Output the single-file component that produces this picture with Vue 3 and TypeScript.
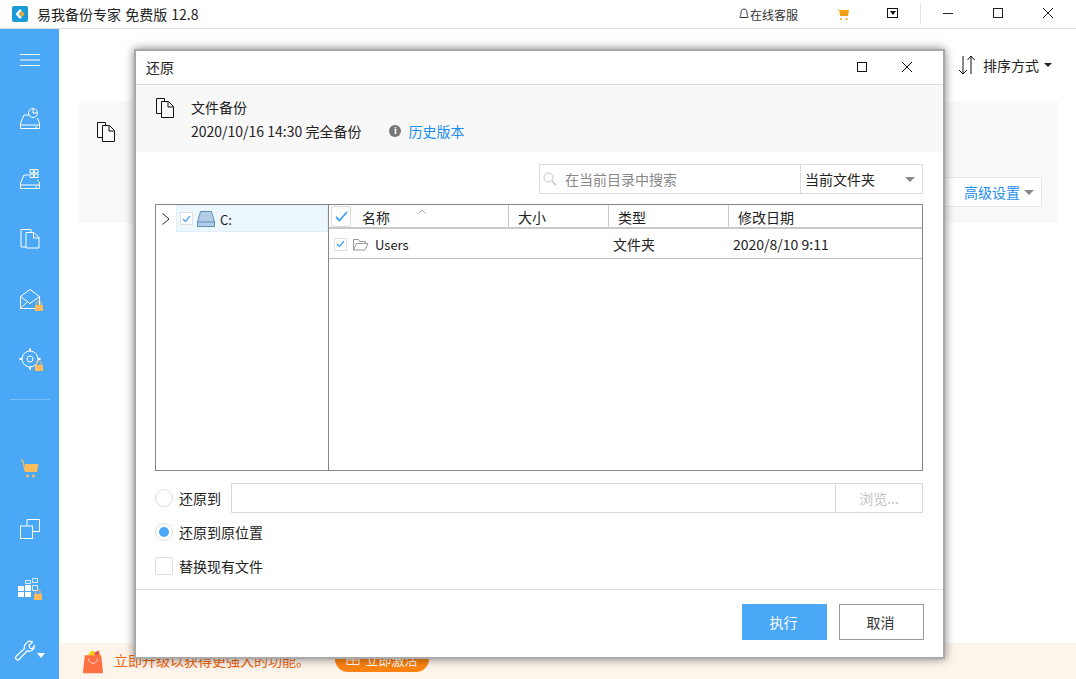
<script setup lang="ts">
interface NavItem { id: string; lock?: boolean }
const topNav: NavItem[] = [{ id: 'disk' }, { id: 'sys' }, { id: 'file' }, { id: 'mail', lock: true }, { id: 'target', lock: true }]
const cols = [
  { label: '大小', w: 100 },
  { label: '类型', w: 120 },
  { label: '修改日期', w: 193 },
]
</script>

<template>
  <div class="app">
    <header class="titlebar">
      <svg class="logo" width="16" height="16" viewBox="0 0 16 16"><rect width="16" height="16" rx="2" fill="#1a9bd7"/><path d="M8 3 3.500 8 8 13l1.800-1.800L6.800 8l3-3.200z" fill="#fff"/><path d="M9.500 4.800 12.700 8 9.500 11.200 8 8z" fill="#f6a821"/></svg>
      <span class="app-title">易我备份专家 免费版 12.8</span>
      <span class="service">
        <svg width="10" height="12" viewBox="0 0 10 12"><path d="M5 1C3 1 2 2.600 2 5c0 2-1 3-1 4.500h8C9 8 8 7 8 5c0-2.400-1-4-3-4z" fill="none" stroke="#333"/></svg>在线客服
      </span>
      <svg class="bar-cart" width="14" height="14" viewBox="0 0 14 14"><path d="M1 2h2l1 7h8l1-6H3.500z" fill="#f0a010"/><circle cx="5" cy="12" r="1" fill="#f0a010"/><circle cx="10.500" cy="12" r="1" fill="#f0a010"/></svg>
      <span class="menu-btn"><i></i></span>
      <span class="bar-sep"></span>
      <div class="win-btns">
        <svg width="12" height="12" viewBox="0 0 12 12"><path d="M1 6.500h10" stroke="#222"/></svg>
        <svg width="12" height="12" viewBox="0 0 12 12"><rect x="1.500" y="1.500" width="9" height="9" fill="none" stroke="#222"/></svg>
        <svg width="12" height="12" viewBox="0 0 12 12"><path d="M1 1l10 10M11 1 1 11" stroke="#222"/></svg>
      </div>
    </header>

    <div class="body">
      <aside class="sidebar">
        <svg class="burger" width="20" height="12" viewBox="0 0 20 12"><path d="M0 .5h20M0 6h20M0 11.500h20" stroke="#fff"/></svg>

        <div class="nav-top">
          <div v-for="n in topNav" :key="n.id" class="nav-item">
            <svg width="24" height="24" viewBox="0 0 24 24" fill="none" stroke="#fff">
              <template v-if="n.id === 'disk'">
                <path d="M2.500 16 6 8h5M2.500 16v5.500h19V16l-2-5M2.500 18h19M17 20h2"/>
                <circle cx="15" cy="6" r="4.500"/><path d="M15 1.500V6h4.500"/>
              </template>
              <template v-else-if="n.id === 'sys'">
                <path d="M2.500 16 6 8h5M2.500 16v5.500h19V16l-2-3M2.500 18h19M17 20h2"/>
                <path d="M12 2.500h3.500V6H12zM16.500 2.500H20V6h-3.500zM12 7h3.500v3.500H12zM16.500 7H20v3.500h-3.500z"/>
              </template>
              <template v-else-if="n.id === 'file'">
                <path d="M8 20H3V2.500h10V5"/><path d="M8 5.500h8l5 5v10.500H8z"/><path d="M15.500 5.500v5.500H21"/>
              </template>
              <template v-else-if="n.id === 'mail'">
                <path d="M2.500 9.500 12 2.500l9.500 7V21.500H2.500zM2.500 9.500l9.500 7 9.500-7M2.500 21.500l7-7"/>
              </template>
              <template v-else>
                <circle cx="12" cy="12" r="8"/><circle cx="12" cy="12" r="3"/>
                <path d="M12 1.500V4M12 20v2.500M1.500 12H4M20 12h2.500" stroke-width="2"/>
              </template>
            </svg>
            <svg v-if="n.lock" class="lock" width="8" height="11" viewBox="0 0 8 11"><path d="M1.800 5.500V3a2.200 2.200 0 0 1 4.400 0v2.500" fill="none" stroke="#fdbb5c"/><rect y="5" width="8" height="6" fill="#fdbb5c"/></svg>
          </div>
        </div>

        <div class="side-sep"></div>

        <div class="nav-bottom">
          <div class="nav-item">
            <svg width="20" height="20" viewBox="0 0 20 20"><path d="M1 1h1.500l2 4L5 13h12l1.500-8H4.500" fill="#fdbb5c"/><path d="M1 .8 2.500 1l2.500 11" stroke="#fdbb5c" fill="none"/><circle cx="7.500" cy="17" r="1.500" fill="#fdbb5c"/><circle cx="13.500" cy="17" r="1.500" fill="#fdbb5c"/></svg>
          </div>
          <div class="nav-item">
            <svg width="20" height="20" viewBox="0 0 20 20" fill="none" stroke="#fff"><path d="M7 6.500V.5h12.500v12H13"/><rect x=".5" y="7" width="12" height="12.500"/></svg>
          </div>
          <div class="nav-item">
            <svg class="grid-icon" width="22" height="22" viewBox="0 0 22 22"><path d="M1 8h6v5H1zM8 7h6v6H8zM1 14h6v5H1zM8 14h6v5H8z" fill="#fff"/><path d="M8.500 2.500h5v3h-5zM15.500.5h5v4h-5zM15.500 7.500h5v5h-5z" fill="none" stroke="#dbeeff"/></svg>
            <svg class="lock lock-grid" width="8" height="11" viewBox="0 0 8 11"><path d="M1.800 5.500V3a2.200 2.200 0 0 1 4.400 0v2.500" fill="none" stroke="#fdbb5c"/><rect y="5" width="8" height="6" fill="#fdbb5c"/></svg>
          </div>
          <div class="nav-item tool">
            <svg width="22" height="22" viewBox="0 0 22 22" fill="none" stroke="#fff" stroke-width="1.200"><path d="M13 3.500a5 5 0 0 1 6.500-1.500L16 5.500l.8 2.500 2.500.8 2-3a5 5 0 0 1-7 5L6 19.500c-1.500 1.500-4.500-1-3-3l8.500-8a5 5 0 0 1 1.500-5z"/></svg>
            <i class="tool-caret"></i>
          </div>
        </div>
      </aside>

      <main class="main">
        <div class="sort">
          <svg class="sort-icon" width="18" height="20" viewBox="0 0 18 20" fill="none" stroke="#111"><path d="M5 1v18M1 15l4 4 4-4" /><path d="M13 19V1M9.500 5 13 1l3.500 4"/></svg>
          <span>排序方式</span><i class="caret dark"></i>
        </div>
        <section class="card">
          <svg class="card-icon" width="18" height="20" viewBox="0 0 18 20" fill="none" stroke="#111"><path d="M5 15.500H.5V.5h8V3"/><path d="M5.500 3.500h7l5 5v11h-12z"/><path d="M12 3.500V9h5.500"/></svg>
          <div class="adv">高级设置<i class="caret gray"></i></div>
        </section>
        <footer class="promo">
          <svg class="bag" width="20" height="25" viewBox="0 0 22 26"><path d="M5 6l5-5 4 2 4-2 1 6z" fill="#f5d400"/><path d="M13 3l4-2 1 5h-5z" fill="#ec407a"/><path d="M2 6h18l2 19a1 1 0 0 1-1 1H1a1 1 0 0 1-1-1z" fill="#ff7043"/><path d="M6 10a5 5 0 0 0 10 0" fill="none" stroke="#ffe0d0"/></svg>
          <span class="promo-text">立即升级以获得更强大的功能。</span>
          <span class="activate">
            <svg width="14" height="12" viewBox="0 0 14 12" fill="none" stroke="#fff"><path d="M1 3.500h12v8H1zM7 3.500v8M1 7h12M3 .5h8"/></svg>
            立即激活
          </span>
        </footer>
      </main>
    </div>

    <div class="dialog">
      <div class="dlg-title">
        <span>还原</span>
        <div class="dlg-btns">
          <svg width="12" height="12" viewBox="0 0 12 12"><rect x="1.500" y="1.500" width="9" height="9" fill="none" stroke="#111"/></svg>
          <svg width="12" height="12" viewBox="0 0 12 12"><path d="M1 1l10 10M11 1 1 11" stroke="#111"/></svg>
        </div>
      </div>

      <div class="dlg-head">
        <svg class="head-icon" width="18" height="20" viewBox="0 0 18 20" fill="none" stroke="#111"><path d="M5 15.500H.5V.5h8V3"/><path d="M5.500 3.500h7l5 5v11h-12z"/><path d="M12 3.500V9h5.500"/></svg>
        <div class="head-text">
          <div>文件备份</div>
          <div class="head-sub">
            <span>2020/10/16 14:30 完全备份</span>
            <span class="info">i</span>
            <a class="link">历史版本</a>
          </div>
        </div>
      </div>

      <div class="search-row">
        <div class="search">
          <div class="search-input">
            <svg width="14" height="14" viewBox="0 0 14 14" fill="none" stroke="#c4c4c4"><circle cx="5.500" cy="5.500" r="4.500"/><path d="M9 9l4 4" stroke-width="1.500"/></svg>
            <span>在当前目录中搜索</span>
          </div>
          <div class="scope"><span>当前文件夹</span><i class="caret gray"></i></div>
        </div>
      </div>

      <div class="browser">
        <div class="tree">
          <svg class="chev" width="10" height="14" viewBox="0 0 10 14"><path d="M1.500 1.500 8 7l-6.500 5.500" fill="none" stroke="#222"/></svg>
          <div class="tree-node">
            <span class="check small">
              <svg width="9" height="8" viewBox="0 0 9 8"><path d="M1 4l2.500 2.500L8 1" fill="none" stroke="#4aa8f7" stroke-width="1.300"/></svg>
            </span>
            <svg width="18" height="16" viewBox="0 0 18 16"><path d="M3.500.5h11L17.500 11v4.500H.5V11z" fill="#b4cde6" stroke="#5f8fb8"/><path d="M.5 11h17" stroke="#5f8fb8"/></svg>
            <span class="drive-label">C:</span>
          </div>
        </div>
        <div class="list">
          <div class="list-head">
            <div class="col-name">
              <span class="check big">
                <svg width="13" height="11" viewBox="0 0 13 11"><path d="M1 6l3.500 3.500L12 1" fill="none" stroke="#3d9ef5" stroke-width="1.800"/></svg>
              </span>
              <span class="name-label">名称</span>
              <svg class="sort-up" width="8" height="5" viewBox="0 0 8 5"><path d="M.5 4.500 4 1l3.500 3.500" fill="none" stroke="#aaa"/></svg>
            </div>
            <div v-for="c in cols" :key="c.label" class="col" :style="{ width: c.w + 'px' }">{{ c.label }}</div>
          </div>
          <div class="list-row">
            <div class="row-name">
              <span class="check small">
                <svg width="9" height="8" viewBox="0 0 9 8"><path d="M1 4l2.500 2.500L8 1" fill="none" stroke="#4aa8f7" stroke-width="1.300"/></svg>
              </span>
              <svg width="17" height="13" viewBox="0 0 17 13" fill="none" stroke="#999"><path d="M1.500 12V1.500h5l1 2h6v2"/><path d="M1.500 12h11.500l3-6.500H4.500z"/></svg>
              <span class="user-label">Users</span>
            </div>
            <div class="row-type">文件夹</div>
            <div class="row-date">2020/8/10 9:11</div>
          </div>
        </div>
      </div>

      <div class="options">
        <div class="opt first">
          <span class="radio"></span>
          <span class="opt-label">还原到</span>
          <div class="path-box">
            <div class="path-input"></div>
            <div class="browse">浏览...</div>
          </div>
        </div>
        <div class="opt">
          <span class="radio on"></span>
          <span class="opt-label">还原到原位置</span>
        </div>
        <div class="opt">
          <span class="square"></span>
          <span class="opt-label">替换现有文件</span>
        </div>
      </div>

      <div class="dlg-foot">
        <button class="btn primary">执行</button>
        <button class="btn">取消</button>
      </div>
    </div>
  </div>
</template>

<style>
html, body { margin: 0; padding: 0; background: #fff; }
</style>

<style scoped>
* { box-sizing: border-box; }
.app {
  position: relative;
  width: 1076px;
  height: 679px;
  overflow: hidden;
  background: #fff;
  font-family: "Noto Sans CJK SC", "Liberation Sans", sans-serif;
  font-size: 14px;
  color: #222;
  display: flex;
  flex-direction: column;
}
.titlebar {
  height: 29px;
  flex: none;
  display: flex;
  align-items: center;
  padding-left: 12px;
  border-bottom: 1px solid #dedede;
}
.app-title { margin-left: 9px; font-size: 14px; word-spacing: 1px; }
.service { margin-left: auto; display: flex; align-items: center; font-size: 12px; color: #333; gap: 1px; }
.bar-cart { margin-left: 38px; }
.menu-btn { margin-left: 37px; width: 11px; height: 10px; margin-top: -2px; border: 1px solid #111; display: flex; align-items: center; justify-content: center; }
.menu-btn i { border: 3px solid transparent; border-top: 4px solid #111; border-bottom: 0; }
.bar-sep { width: 1px; height: 20px; background: #e2e2e2; margin-left: 22px; }
.win-btns { display: flex; gap: 38px; margin-left: 21px; margin-top: -2px; padding-right: 22px; }
.body { flex: 1; display: flex; min-height: 0; }
.sidebar {
  width: 59px;
  flex: none;
  background: #4aa8f7;
  display: flex;
  flex-direction: column;
  align-items: center;
  padding-top: 25px;
  position: relative;
}
.burger { display: block; }
.nav-top { margin-top: 41px; display: flex; flex-direction: column; gap: 36px; }
.nav-item { position: relative; width: 24px; height: 24px; display: flex; align-items: center; justify-content: center; }
.lock { position: absolute; right: -1px; bottom: 0; }
.lock-grid { right: 0; bottom: 1px; }
.grid-icon { margin-left: -4px; }
.side-sep { width: 40px; height: 1px; background: rgba(255, 255, 255, .25); margin-top: 28px; }
.nav-bottom { margin-top: 57px; display: flex; flex-direction: column; gap: 36px; }
.tool { margin-top: 2px; margin-left: -6px; }
.tool-caret { position: absolute; right: -9.500px; bottom: 5px; border: 4px solid transparent; border-top: 5px solid #fff; border-bottom: 0; }
.main { flex: 1; position: relative; display: flex; flex-direction: column; min-width: 0; }
.sort { height: 72px; flex: none; display: flex; align-items: center; justify-content: flex-end; padding-right: 24px; font-size: 14px; gap: 5px; }
.sort-icon { margin-right: 2px; }
.caret { display: inline-block; border: 4px solid transparent; border-top: 4px solid #222; border-bottom: 0; }
.caret.gray { border-top-color: #888; border-left-width: 5px; border-right-width: 5px; border-top-width: 5px; }
.card { height: 122px; flex: none; margin: 0 18px 0 20px; background: #f9f9f9; position: relative; display: flex; justify-content: flex-end; }
.card-icon { position: absolute; left: 18px; top: 21px; }
.adv { width: 100px; height: 30px; margin-top: 76px; margin-right: 16px; background: #fff; border: 1px solid #e4e9f1; color: #1c8ef0; display: flex; align-items: center; justify-content: flex-end; padding-right: 7px; gap: 4px; }
.promo { margin-top: auto; height: 36px; background: #fdf4eb; display: flex; align-items: center; padding-left: 24px; }
.promo-text { color: #f0650e; margin-left: 11px; margin-top: -2px; font-size: 14px; }
.activate { margin-left: 25px; margin-top: -4px; width: 94px; height: 26px; border-radius: 13px; background: #fd8412; color: #fff; display: flex; align-items: center; justify-content: center; gap: 5px; font-size: 13px; }
.dialog {
  position: absolute;
  left: 134px;
  top: 49px;
  width: 811px;
  height: 610px;
  background: #fff;
  border: 2px solid #a9a9a9;
  box-shadow: 0 0 9px rgba(0, 0, 0, .5);
  display: flex;
  flex-direction: column;
}
.dlg-title { height: 34px; flex: none; display: flex; align-items: center; justify-content: space-between; padding: 0 0 2px 10px; border-bottom: 1px solid #dcdcdc; font-size: 14px; }
.dlg-btns { display: flex; gap: 33px; padding-right: 30px; }
.dlg-head { height: 67px; flex: none; background: #f8f8f8; display: flex; padding: 12px 0 0 20px; gap: 17px; }
.head-icon { margin-top: 1px; }
.head-text { display: flex; flex-direction: column; gap: 4px; font-size: 14px; line-height: 20px; }
.head-sub { display: flex; align-items: center; }
.info { margin-left: 28px; width: 12px; height: 12px; border-radius: 50%; background: #777; color: #fff; font: bold 10px/12px "Liberation Serif", serif; text-align: center; }
.link { margin-left: 7px; color: #1c8ef0; font-size: 14px; }
.search-row { display: flex; justify-content: flex-end; padding: 12px 20px 0 0; flex: none; }
.search { width: 384px; height: 30px; border: 1px solid #dcdcdc; display: flex; }
.search-input { flex: 1; display: flex; align-items: center; gap: 8px; padding-left: 3px; color: #888; font-size: 14px; }
.scope { width: 122px; border-left: 1px solid #dcdcdc; display: flex; align-items: center; justify-content: space-between; padding: 0 7px 0 4px; font-size: 14px; color: #222; }
.browser { margin: 10px 20px 0 19px; height: 267px; flex: none; border: 1px solid #858585; display: flex; }
.tree { width: 173px; flex: none; border-right: 1px solid #858585; padding-left: 5px; display: flex; align-items: flex-start; gap: 5px; position: relative; }
.chev { margin-top: 7px; }
.tree-node { flex: 1; height: 27px; background: #ecf7fe; border: 1px solid #dff0fc; display: flex; align-items: center; padding-left: 3px; gap: 4px; font-size: 13px; }
.drive-label { margin: 1px 0 0 1px; }
.check { display: inline-flex; align-items: center; justify-content: center; background: #fff; flex: none; }
.check.small { width: 13px; height: 13px; border: 1px solid #e0e0e0; }
.check.big { width: 20px; height: 21px; border: 1px solid #dadada; border-radius: 2px; }
.list { flex: 1; min-width: 0; }
.list-head { height: 24px; display: flex; border-bottom: 2px solid #c9c9c9; font-size: 14px; }
.col-name { width: 179px; position: relative; display: flex; align-items: center; padding-left: 2px; flex: none; }
.name-label { margin: 2px 0 0 11px; }
.sort-up { position: absolute; left: 89px; top: 4px; }
.col { border-left: 1px solid #c9c9c9; padding: 2px 0 0 9px; display: flex; align-items: center; flex: none; }
.list-row { height: 30px; border-bottom: 1px solid #bcbcbc; display: flex; align-items: center; font-size: 13px; padding-top: 1px; }
.row-name { width: 284px; display: flex; align-items: center; gap: 5px; padding-left: 5px; flex: none; }
.user-label { margin-left: 1px; }
.row-type { width: 120px; flex: none; font-size: 14px; }
.row-date { color: #222; font-size: 14px; }
.options { flex: none; padding: 12px 20px 0 19px; }
.opt { display: flex; align-items: center; height: 30px; margin-top: 4px; font-size: 14px; gap: 6px; }
.opt.first { margin-top: 0; }
.radio { width: 18px; height: 18px; border: 1px solid #dedede; border-radius: 50%; position: relative; flex: none; }
.radio.on::after { content: ""; position: absolute; inset: 3px; background: #4aa8f7; border-radius: 50%; }
.square { width: 18px; height: 18px; border: 1px solid #dedede; border-radius: 2px; flex: none; }
.path-box { flex: 1; height: 30px; display: flex; border: 1px solid #d8d8d8; margin-left: 4px; }
.path-input { flex: 1; }
.browse { width: 87px; border-left: 1px solid #d8d8d8; color: #c4c4c4; display: flex; align-items: center; justify-content: center; }
.dlg-foot { margin-top: auto; height: 68px; flex: none; border-top: 1px solid #e0e0e0; display: flex; justify-content: flex-end; align-items: flex-start; padding: 14px 19px 0 0; gap: 12px; }
.btn { width: 85px; height: 36px; border: 1px solid #999; background: #fff; color: #333; font: 14px "Noto Sans CJK SC", sans-serif; padding: 0 2px 0 0; }
.btn.primary { background: #4aa8f7; border-color: #4aa8f7; color: #fff; }
</style>
